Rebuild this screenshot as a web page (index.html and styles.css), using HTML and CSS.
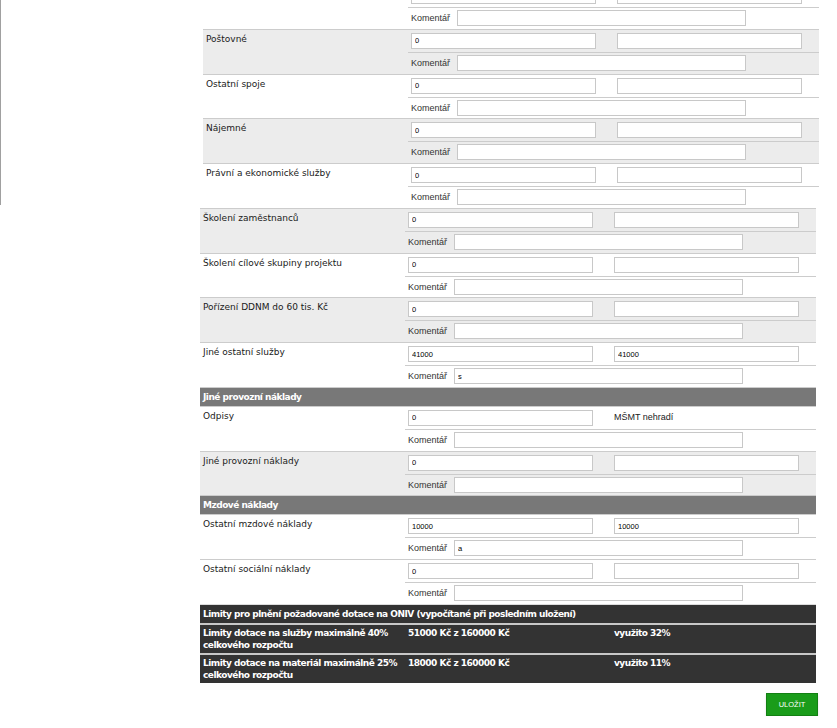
FILE: index.html
```html
<!DOCTYPE html>
<html lang="cs">
<head>
  <meta charset="UTF-8">
  <meta name="viewport" content="width=device-width, initial-scale=1.0">
  <title>Rozpočet projektu</title>
  <link rel="stylesheet" href="styles.css">
</head>
<body>

  <div class="page">
    <div class="sidebar"></div>

    <div class="content">
      <!-- Služby (vnořená tabulka, horní řádek je odrolovaný) -->
      <table class="costs costs-sub">
        <colgroup><col class="c-label"><col class="c-val"><col class="c-val2"></colgroup>
        <tr class="item">
          <td class="label" rowspan="2"></td>
          <td><input type="text" value="0"></td>
          <td><input type="text"></td>
        </tr>
        <tr class="note">
          <td colspan="2"><div class="note-line"><span class="note-label">Komentář</span><input type="text" class="note-input"></div></td>
        </tr>

        <tr class="item alt">
          <td class="label" rowspan="2">Poštovné</td>
          <td><input type="text" value="0"></td>
          <td><input type="text"></td>
        </tr>
        <tr class="note alt">
          <td colspan="2"><div class="note-line"><span class="note-label">Komentář</span><input type="text" class="note-input"></div></td>
        </tr>

        <tr class="item">
          <td class="label" rowspan="2">Ostatní spoje</td>
          <td><input type="text" value="0"></td>
          <td><input type="text"></td>
        </tr>
        <tr class="note">
          <td colspan="2"><div class="note-line"><span class="note-label">Komentář</span><input type="text" class="note-input"></div></td>
        </tr>

        <tr class="item alt">
          <td class="label" rowspan="2">Nájemné</td>
          <td><input type="text" value="0"></td>
          <td><input type="text"></td>
        </tr>
        <tr class="note alt">
          <td colspan="2"><div class="note-line"><span class="note-label">Komentář</span><input type="text" class="note-input"></div></td>
        </tr>

        <tr class="item">
          <td class="label" rowspan="2">Právní a ekonomické služby</td>
          <td><input type="text" value="0"></td>
          <td><input type="text"></td>
        </tr>
        <tr class="note">
          <td colspan="2"><div class="note-line"><span class="note-label">Komentář</span><input type="text" class="note-input"></div></td>
        </tr>
      </table>

      <table class="costs">
        <colgroup><col class="c-label"><col class="c-val"><col class="c-val2"></colgroup>
        <tr class="item alt">
          <td class="label" rowspan="2">Školení zaměstnanců</td>
          <td><input type="text" value="0"></td>
          <td><input type="text"></td>
        </tr>
        <tr class="note alt">
          <td colspan="2"><div class="note-line"><span class="note-label">Komentář</span><input type="text" class="note-input"></div></td>
        </tr>

        <tr class="item">
          <td class="label" rowspan="2">Školení cílové skupiny projektu</td>
          <td><input type="text" value="0"></td>
          <td><input type="text"></td>
        </tr>
        <tr class="note">
          <td colspan="2"><div class="note-line"><span class="note-label">Komentář</span><input type="text" class="note-input"></div></td>
        </tr>

        <tr class="item alt">
          <td class="label" rowspan="2">Pořízení DDNM do 60 tis. Kč</td>
          <td><input type="text" value="0"></td>
          <td><input type="text"></td>
        </tr>
        <tr class="note alt">
          <td colspan="2"><div class="note-line"><span class="note-label">Komentář</span><input type="text" class="note-input"></div></td>
        </tr>

        <tr class="item">
          <td class="label" rowspan="2">Jiné ostatní služby</td>
          <td><input type="text" value="41000"></td>
          <td><input type="text" value="41000"></td>
        </tr>
        <tr class="note">
          <td colspan="2"><div class="note-line"><span class="note-label">Komentář</span><input type="text" class="note-input" value="s"></div></td>
        </tr>

        <tr class="group">
          <td colspan="3">Jiné provozní náklady</td>
        </tr>

        <tr class="item">
          <td class="label" rowspan="2">Odpisy</td>
          <td><input type="text" value="0"></td>
          <td class="text-note">MŠMT nehradí</td>
        </tr>
        <tr class="note">
          <td colspan="2"><div class="note-line"><span class="note-label">Komentář</span><input type="text" class="note-input"></div></td>
        </tr>

        <tr class="item alt">
          <td class="label" rowspan="2">Jiné provozní náklady</td>
          <td><input type="text" value="0"></td>
          <td><input type="text"></td>
        </tr>
        <tr class="note alt">
          <td colspan="2"><div class="note-line"><span class="note-label">Komentář</span><input type="text" class="note-input"></div></td>
        </tr>

        <tr class="group">
          <td colspan="3">Mzdové náklady</td>
        </tr>

        <tr class="item">
          <td class="label" rowspan="2">Ostatní mzdové náklady</td>
          <td><input type="text" value="10000"></td>
          <td><input type="text" value="10000"></td>
        </tr>
        <tr class="note">
          <td colspan="2"><div class="note-line"><span class="note-label">Komentář</span><input type="text" class="note-input" value="a"></div></td>
        </tr>

        <tr class="item">
          <td class="label" rowspan="2">Ostatní sociální náklady</td>
          <td><input type="text" value="0"></td>
          <td><input type="text"></td>
        </tr>
        <tr class="note">
          <td colspan="2"><div class="note-line"><span class="note-label">Komentář</span><input type="text" class="note-input"></div></td>
        </tr>
      </table>

      <!-- Limity -->
      <table class="limits">
        <colgroup><col class="c-label"><col class="c-val"><col class="c-val2"></colgroup>
        <tr class="head">
          <td colspan="3">Limity pro plnění požadované dotace na ONIV (vypočítané při posledním uložení)</td>
        </tr>
        <tr>
          <td>Limity dotace na služby maximálně 40% celkového rozpočtu</td>
          <td>51000 Kč z 160000 Kč</td>
          <td>využito 32%</td>
        </tr>
        <tr>
          <td>Limity dotace na materiál maximálně 25% celkového rozpočtu</td>
          <td>18000 Kč z 160000 Kč</td>
          <td>využito 11%</td>
        </tr>
      </table>

      <div class="actions">
        <button type="submit" class="btn-save">ULOŽIT</button>
      </div>
    </div>
  </div>

</body>
</html>
```

FILE: styles.css
```css
body {
  margin: 0;
  font-family: "DejaVu Sans", Verdana, sans-serif;
  font-size: 9px;
  color: #1a1a1a;
  background-color: #fff;
}
.page {
  display: flex;
  align-items: flex-start;
}
.sidebar {
  width: 199px;
  height: 205px;
  border-left: 1px solid #a0a0a0;
}
.content {
  width: 619px;
  margin-top: -16px;
}
.costs {
  width: 616px;
  border-collapse: collapse;
  table-layout: fixed;
}
.costs-sub {
  margin-left: 3px;
}
.c-label {
  width: 205px;
}
.c-val {
  width: 206px;
}
.c-val2 {
  width: 205px;
}
.costs td {
  padding: 3px;
  vertical-align: top;
  line-height: 11px;
}
.costs .item td {
  border-top: 1px solid #ccc;
}
.costs .note td {
  border-top: 1px solid #ccc;
  padding-top: 2px;
  padding-bottom: 2.75px;
}
.costs td.label {
  padding-top: 4px;
}
.costs .alt td {
  background-color: #ececec;
}
.costs input {
  display: block;
  width: 185px;
  height: 16px;
  box-sizing: border-box;
  margin: 0;
  padding: 0 3px;
  border: 1px solid #c8c8c8;
  background-color: #fff;
  color: #000;
  font: 7.5px "Liberation Sans", Arial, sans-serif;
}
.note-line {
  display: flex;
  align-items: center;
}
.note-label {
  width: 46px;
  font: 9px "Liberation Sans", Arial, sans-serif;
  color: #333;
}
.costs input.note-input {
  width: 289px;
}
.costs .text-note {
  padding-top: 5px;
  font: 9px "Liberation Sans", Arial, sans-serif;
  color: #222;
}
.costs .group td {
  padding: 4px 3px 3px;
  border-top: 1px solid #ccc;
  background-color: #787878;
  color: #fff;
  font-weight: bold;
  letter-spacing: -0.5px;
}
.limits {
  width: 616px;
  border-collapse: collapse;
  table-layout: fixed;
  border-top: 1px solid #ddd;
  background-color: #333;
  color: #fff;
  font-weight: bold;
  letter-spacing: -0.5px;
}
.limits td {
  padding: 2px 3px;
  line-height: 12px;
  vertical-align: top;
}
.limits .head td {
  padding: 3px;
}
.limits tr + tr td {
  border-top: 2px solid #c8c8c8;
}
.actions {
  display: flex;
  justify-content: flex-end;
  padding: 10px 1px 0 0;
}
.btn-save {
  width: 52px;
  height: 23px;
  padding: 0;
  border: 1px solid #138013;
  background-color: #1a9c1a;
  color: #fff;
  font: 7.5px "Liberation Sans", Arial, sans-serif;
  box-shadow: 0 2px 2px rgba(0, 0, 0, 0.12);
  cursor: pointer;
}
```
